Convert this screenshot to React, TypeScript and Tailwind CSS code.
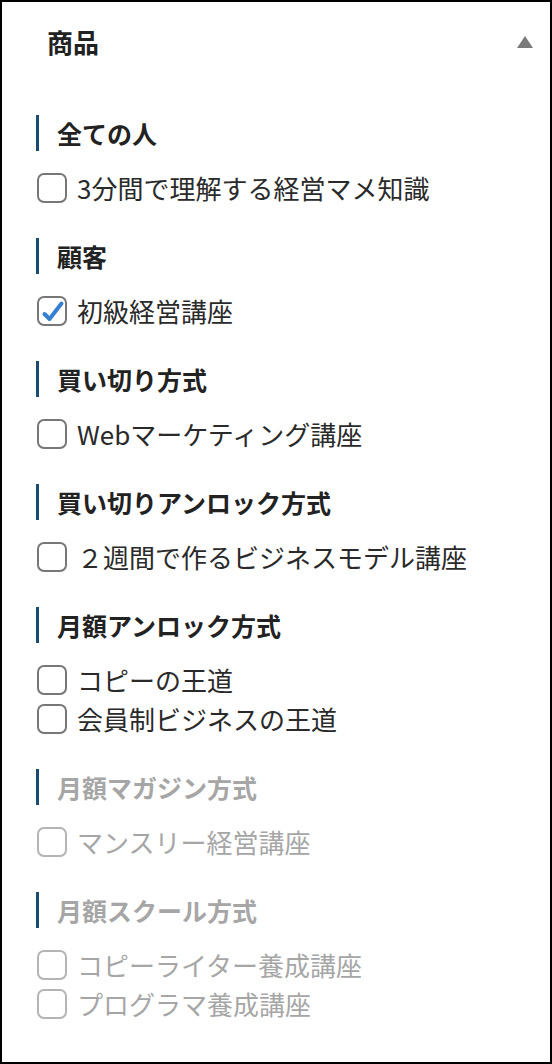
import React from 'react';

type Section = {
  title: string;
  disabled?: boolean;
  items: { label: string; checked?: boolean }[];
};

const sections: Section[] = [
  { title: '全ての人', items: [{ label: '3分間で理解する経営マメ知識' }] },
  { title: '顧客', items: [{ label: '初級経営講座', checked: true }] },
  { title: '買い切り方式', items: [{ label: 'Webマーケティング講座' }] },
  { title: '買い切りアンロック方式', items: [{ label: '２週間で作るビジネスモデル講座' }] },
  { title: '月額アンロック方式', items: [{ label: 'コピーの王道' }, { label: '会員制ビジネスの王道' }] },
  { title: '月額マガジン方式', disabled: true, items: [{ label: 'マンスリー経営講座' }] },
  {
    title: '月額スクール方式',
    disabled: true,
    items: [{ label: 'コピーライター養成講座' }, { label: 'プログラマ養成講座' }],
  },
];

function Checkbox({ checked, disabled }: { checked?: boolean; disabled?: boolean }) {
  return (
    <span
      className={`w-[30px] h-[30px] shrink-0 rounded-[7px] border-2 bg-white flex items-center justify-center ${
        disabled ? 'border-[#b4b4b4]' : 'border-[#777777]'
      }`}
    >
      {checked && (
        <svg width="30" height="30" viewBox="0 0 30 30" className="-m-[2px]">
          <path d="M7.5 18 L12.5 23 L24.5 7.5" fill="none" stroke="#3580d2" strokeWidth="4" strokeLinecap="round" strokeLinejoin="round" />
        </svg>
      )}
    </span>
  );
}

export default function App() {
  return (
    <div
      className="h-[1064px] border-2 border-black bg-white text-[25px]"
      style={{ fontFamily: '"Noto Sans CJK JP", "Noto Sans", sans-serif' }}
    >
      <div className="h-[80px] flex items-center justify-between pl-[45px] pr-[17px]">
        <h2 className="font-bold text-[#222222] leading-none text-[26px]">商品</h2>
        <svg width="16" height="12" viewBox="0 0 16 12">
          <path d="M8 0 L16 12 L0 12 Z" fill="#7a7a7a" />
        </svg>
      </div>

      <div className="pt-[33px] pl-[34px] flex flex-col gap-[31px]">
        {sections.map((s) => (
          <div key={s.title}>
            <div className="flex items-center h-[36px] mb-[17px]">
              <span className="w-[3px] h-full bg-[#1c4b72]" />
              <span className={`ml-[18px] font-bold leading-none ${s.disabled ? 'text-[#a6a6a6]' : 'text-[#222222]'}`}>
                {s.title}
              </span>
            </div>
            {s.items.map((it) => (
              <label key={it.label} className="flex items-center h-[39px] gap-[10px] pl-[1px]">
                <Checkbox checked={it.checked} disabled={s.disabled} />
                <span className={`leading-none text-[26px] ${s.disabled ? 'text-[#a6a6a6]' : 'text-[#2a2a2a]'}`}>{it.label}</span>
              </label>
            ))}
          </div>
        ))}
      </div>
    </div>
  );
}
